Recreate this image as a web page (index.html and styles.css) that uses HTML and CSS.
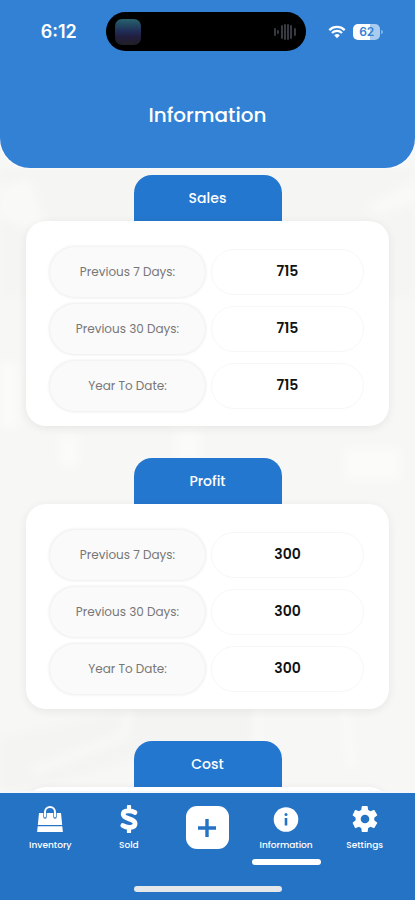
FILE: index.html
```html
<!DOCTYPE html>
<html lang="en">
<head>
<meta charset="utf-8">
<meta name="viewport" content="width=device-width, initial-scale=1">
<title>Information</title>
<link rel="stylesheet" href="styles.css">
</head>
<body>
<div class="app">
  <header class="header">
    <div class="status">
      <span class="clock">6:12</span>
      <div class="island">
        <span class="artwork"></span>
        <svg class="wave" viewBox="0 0 24 18" aria-hidden="true"><path d="M2 6v6M5 8v2M9 3v12M12 2v14M15 2v14M18 3v12M22 6v6" stroke="#3e4148" stroke-width="1.8" stroke-linecap="round"/></svg>
      </div>
      <div class="indicators">
        <svg class="wifi" viewBox="0 0 18 14" aria-hidden="true"><path d="M1.3 5.1a11 11 0 0 1 15.4 0M4 8a7.1 7.1 0 0 1 10 0" fill="none" stroke="#fff" stroke-width="2.3"/><path d="M6.2 10.3a4 4 0 0 1 5.6 0L9 13.3z" fill="#fff"/></svg>
        <span class="battery">62</span>
      </div>
    </div>
    <h1 class="title">Information</h1>
  </header>
  <main class="content">
    <svg class="backdrop" viewBox="0 0 415 623" preserveAspectRatio="none" aria-hidden="true">
      <defs><filter id="haze"><feGaussianBlur stdDeviation="4"/></filter></defs>
      <g filter="url(#haze)">
        <path d="M0 0h415v130H0z" fill="#f5f5f4"/>
        <path d="M0 20l30-10 20 60-50-20zM365 40l50-30v25l-35 12z" fill="#f9f9f8"/>
        <path d="M0 195h18v65H0zM60 268h18v30H60zM176 262h24v30h-24zM345 280h55v32h-55z" fill="#fbfbfa"/>
        <path d="M0 570l135-30v50L30 623H0zM135 540h120v50H125z" fill="#f4f4f3"/>
        <path d="M130 540l-7 28-90 35M257 540v38M345 540l7 60" fill="none" stroke="#fdfdfc" stroke-width="4"/>
      </g>
    </svg>
    <section class="group">
      <h2 class="tab">Sales</h2>
      <dl class="card">
        <div class="row"><dt>Previous 7 Days:</dt><dd>715</dd></div>
        <div class="row"><dt>Previous 30 Days:</dt><dd>715</dd></div>
        <div class="row"><dt>Year To Date:</dt><dd>715</dd></div>
      </dl>
    </section>
    <section class="group">
      <h2 class="tab">Profit</h2>
      <dl class="card">
        <div class="row"><dt>Previous 7 Days:</dt><dd>300</dd></div>
        <div class="row"><dt>Previous 30 Days:</dt><dd>300</dd></div>
        <div class="row"><dt>Year To Date:</dt><dd>300</dd></div>
      </dl>
    </section>
    <section class="group">
      <h2 class="tab">Cost</h2>
      <div class="card"></div>
    </section>
  </main>
  <footer class="footer">
    <nav class="nav">
      <a class="item" href="#inventory">
        <svg class="icon" viewBox="0 0 28 28" aria-hidden="true"><path d="M3 8h22l1.200 12H1.800zM1.700 21.200h24.600l.6 5.800H1.100z" fill="#fff"/><path d="M9 12V7.500M19 12V7.500" fill="none" stroke="#2573c5" stroke-width="3.400" stroke-linecap="round"/><path d="M9 11.500V7a5 5 0 0 1 10 0v4.500" fill="none" stroke="#fff" stroke-width="2" stroke-linecap="round"/></svg>
        <span>Inventory</span>
      </a>
      <a class="item" href="#sold">
        <svg class="icon" viewBox="0 0 28 28" aria-hidden="true"><path d="M14 1.500v4M14 22.500v4.500" stroke="#fff" stroke-width="4.200" stroke-linecap="round"/><path d="M20 7.500C17 5.500 8.200 4.400 8.200 9.300c0 5.400 11.900 3.700 11.900 9.200 0 5.200-8.600 4.500-12.300 2.100" fill="none" stroke="#fff" stroke-width="4.800" stroke-linecap="round"/></svg>
        <span>Sold</span>
      </a>
      <button class="add" type="button" aria-label="Add"><svg viewBox="0 0 20 20" aria-hidden="true"><path d="M10 1v18M1 10h18" stroke="#2573c5" stroke-width="3.400"/></svg></button>
      <a class="item active" href="#information" aria-current="page">
        <svg class="icon" viewBox="0 0 28 28" aria-hidden="true"><circle cx="14" cy="14.500" r="12.300" fill="#fff"/><path d="M14 13v7.500" stroke="#2573c5" stroke-width="2.600"/><circle cx="14" cy="9.500" r="1.500" fill="#2573c5"/></svg>
        <span>Information</span>
      </a>
      <a class="item" href="#settings">
        <svg class="icon" viewBox="0 0 24 24" aria-hidden="true"><path fill="#fff" d="M19.900 13.100a8 8 0 0 0 0-2.200l2.400-1.800a.6.6 0 0 0 .1-.8L20.100 4.500a.6.6 0 0 0-.7-.3l-2.800 1.200a8 8 0 0 0-1.900-1.100L14.300 1.300a.6.6 0 0 0-.6-.5H9.800a.6.6 0 0 0-.6.5l-.4 3a8 8 0 0 0-1.900 1.100L4.100 4.200a.6.6 0 0 0-.7.300L1.500 8.300a.6.6 0 0 0 .1.800L4 10.900a8 8 0 0 0 0 2.200l-2.400 1.800a.6.6 0 0 0-.1.800l1.900 3.800a.6.6 0 0 0 .7.300l2.800-1.200a8 8 0 0 0 1.900 1.100l.4 3a.6.6 0 0 0 .6.500h3.900a.6.6 0 0 0 .6-.5l.4-3a8 8 0 0 0 1.900-1.100l2.800 1.200a.6.6 0 0 0 .7-.3l2.300-3.800a.6.6 0 0 0-.1-.8z"/><circle cx="12" cy="12" r="3.700" fill="#2573c5"/></svg>
        <span>Settings</span>
      </a>
    </nav>
    <div class="home"></div>
  </footer>
</div>
</body>
</html>
```
FILE: styles.css
```css
* { box-sizing: border-box; }

body {
  margin: 0;
  background: #f7f7f6;
  color: #111;
  font-family: Poppins, Inter, "Open Sans", sans-serif;
}

.app {
  display: flex;
  flex-direction: column;
  height: 100vh;
}

.header {
  flex: none;
  padding: 12px 0 39px;
  border-radius: 0 0 30px 30px;
  background: #3381d4;
  color: #fff;
  box-shadow: 0 1px 2px #fff;
}

.status {
  display: grid;
  grid-template-columns: 1fr 200px 1fr;
  align-items: center;
  padding-right: 4px;
}

.clock {
  padding-left: 12px;
  text-align: center;
  font-family: Inter, "Open Sans", sans-serif;
  font-size: 18px;
  font-weight: 600;
}

.island {
  display: flex;
  align-items: center;
  justify-content: space-between;
  height: 39px;
  padding: 0 9px;
  border-radius: 20px;
  background: #000;
}

.artwork {
  width: 26px;
  height: 26px;
  border-radius: 7px;
  background: linear-gradient(#27626d, #202f58 45%, #211d3c 70%, #202024);
}

.wave { width: 24px; height: 18px; }

.indicators {
  display: flex;
  align-items: center;
  justify-content: center;
  gap: 7px;
  padding-right: 8px;
}

.wifi { width: 18px; height: 14px; }

.battery {
  position: relative;
  width: 27px;
  border-radius: 5px;
  background: linear-gradient(90deg, #fff 62%, #a9cbee 62%);
  color: #3381d4;
  text-align: center;
  font-family: Inter, "Open Sans", sans-serif;
  font-size: 12px;
  font-weight: 600;
  line-height: 16px;
}

.battery::after {
  content: "";
  position: absolute;
  top: 6px;
  right: -3px;
  width: 2px;
  height: 4px;
  border-radius: 0 2px 2px 0;
  background: #86b4e5;
}

.title {
  margin: 50px 0 0;
  text-align: center;
  font-size: 20px;
  font-weight: 500;
  line-height: 28px;
}

.content {
  position: relative;
  flex: 1;
  min-height: 0;
  overflow: hidden;
  padding: 7px 26px 0;
}

.backdrop {
  position: absolute;
  inset: 0;
  width: 100%;
  height: 100%;
}

.group {
  position: relative;
  margin-bottom: 32px;
}

.tab {
  width: 148px;
  margin: 0 auto;
  border-radius: 18px 18px 0 0;
  background: #2477ce;
  color: #fff;
  text-align: center;
  font-size: 14px;
  font-weight: 500;
  line-height: 46px;
}

.card {
  display: flex;
  flex-direction: column;
  gap: 7px;
  min-height: 205px;
  margin: 0;
  padding: 26px 25px 15px 24px;
  border-radius: 20px;
  background: #fff;
  box-shadow: 0 2px 10px rgba(0, 0, 0, 0.07);
}

.row {
  display: grid;
  grid-template-columns: 155fr 153fr;
  align-items: center;
  gap: 6px;
}

.row dt {
  border-radius: 25px;
  background: #fafafa;
  box-shadow: 0 0 3px 1px rgba(0, 0, 0, 0.08);
  color: #777;
  text-align: center;
  font-size: 12px;
  line-height: 50px;
}

.row dd {
  margin: 0;
  padding-bottom: 2px;
  border: 1px solid #f7f7f7;
  border-radius: 23px;
  text-align: center;
  font-size: 14px;
  font-weight: 600;
  line-height: 42px;
}

.footer {
  position: relative;
  flex: none;
  padding: 12px 11px 8px;
  border-top: 2px solid #f4f8fc;
  background: #2573c5;
}

.nav {
  display: grid;
  grid-template-columns: repeat(5, 1fr);
  justify-items: center;
  align-items: start;
  height: 81px;
}

.item {
  display: flex;
  flex-direction: column;
  align-items: center;
  color: #fff;
  font-size: 9px;
  font-weight: 500;
  line-height: 14px;
  text-decoration: none;
}

.icon {
  width: 28px;
  height: 28px;
  margin-bottom: 5px;
}

.active::after {
  content: "";
  width: 69px;
  height: 6px;
  margin-top: 7px;
  border-radius: 3px;
  background: #fff;
}

.add {
  display: grid;
  place-items: center;
  width: 43px;
  height: 43px;
  margin: 1px 0 0;
  padding: 0;
  border: 0;
  border-radius: 11px;
  background: #fff;
}

.add svg { width: 20px; height: 20px; }

.home {
  width: 148px;
  height: 6px;
  margin: 0 auto;
  border-radius: 3px;
  background: #e4e8ea;
}
```
